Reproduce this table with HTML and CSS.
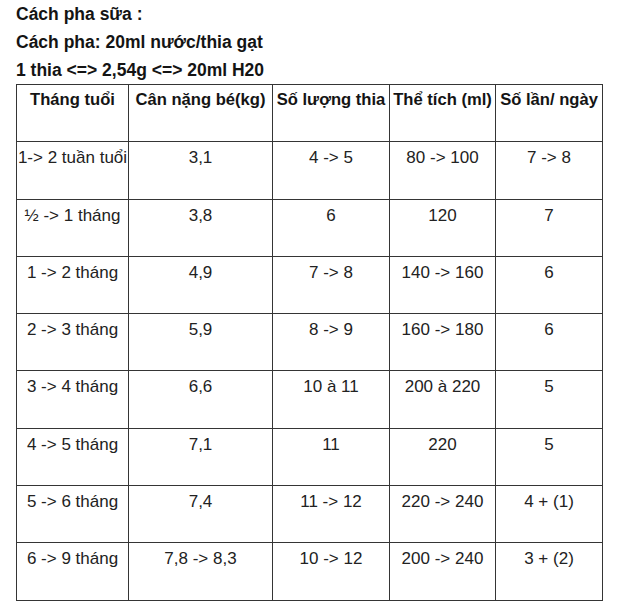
FILE: index.html
```html
<!DOCTYPE html>
<html lang="vi">
<head>
<meta charset="utf-8">
<title>Cách pha sữa</title>
<link rel="stylesheet" href="styles.css">
</head>
<body>
<div class="page">
  <div class="intro">
    <div>Cách pha sữa :</div>
    <div>Cách pha: 20ml nước/thia gạt</div>
    <div>1 thia &lt;=&gt; 2,54g &lt;=&gt; 20ml H20</div>
  </div>
  <table class="grid">
    <colgroup>
      <col class="c1"><col class="c2"><col class="c3"><col class="c4"><col class="c5">
    </colgroup>
    <thead>
      <tr><th>Tháng tuổi</th><th>Cân nặng bé(kg)</th><th>Số lượng thia</th><th>Thể tích (ml)</th><th>Số lần/ ngày</th></tr>
    </thead>
    <tbody>
      <tr><td>1-&gt; 2 tuần tuổi</td><td>3,1</td><td>4 -&gt; 5</td><td>80 -&gt; 100</td><td>7 -&gt; 8</td></tr>
      <tr><td>½ -&gt; 1 tháng</td><td>3,8</td><td>6</td><td>120</td><td>7</td></tr>
      <tr><td>1 -&gt; 2 tháng</td><td>4,9</td><td>7 -&gt; 8</td><td>140 -&gt; 160</td><td>6</td></tr>
      <tr><td>2 -&gt; 3 tháng</td><td>5,9</td><td>8 -&gt; 9</td><td>160 -&gt; 180</td><td>6</td></tr>
      <tr><td>3 -&gt; 4 tháng</td><td>6,6</td><td>10 à 11</td><td>200 à 220</td><td>5</td></tr>
      <tr><td>4 -&gt; 5 tháng</td><td>7,1</td><td>11</td><td>220</td><td>5</td></tr>
      <tr><td>5 -&gt; 6 tháng</td><td>7,4</td><td>11 -&gt; 12</td><td>220 -&gt; 240</td><td>4 + (1)</td></tr>
      <tr><td>6 -&gt; 9 tháng</td><td>7,8 -&gt; 8,3</td><td>10 -&gt; 12</td><td>200 -&gt; 240</td><td>3 + (2)</td></tr>
    </tbody>
  </table>
</div>
</body>
</html>
```
FILE: styles.css
```css
html, body {
  margin: 0;
  padding: 0;
  background: #ffffff;
}
.page {
  padding-left: 16px;
  font-family: "Liberation Sans", Arial, sans-serif;
  color: #1e1e1e;
}
.intro {
  font-weight: bold;
  font-size: 17.5px;
  line-height: 28px;
  color: #141414;
}
.grid {
  border-collapse: collapse;
  table-layout: fixed;
  width: 587px;
}
.c1 { width: 112px; }
.c2 { width: 144px; }
.c3 { width: 117px; }
.c4 { width: 106px; }
.c5 { width: 107px; }
.grid th, .grid td {
  border: 1px solid #353535;
  vertical-align: top;
  text-align: center;
  padding: 0;
  white-space: nowrap;
  overflow: visible;
}
.grid tr {
  height: 57.3px;
}
.grid th {
  font-size: 16.6px;
  font-weight: bold;
  color: #141414;
  padding-top: 5px;
}
.grid td {
  font-size: 17px;
  font-weight: normal;
  padding-top: 6px;
  color: #222;
}
```
